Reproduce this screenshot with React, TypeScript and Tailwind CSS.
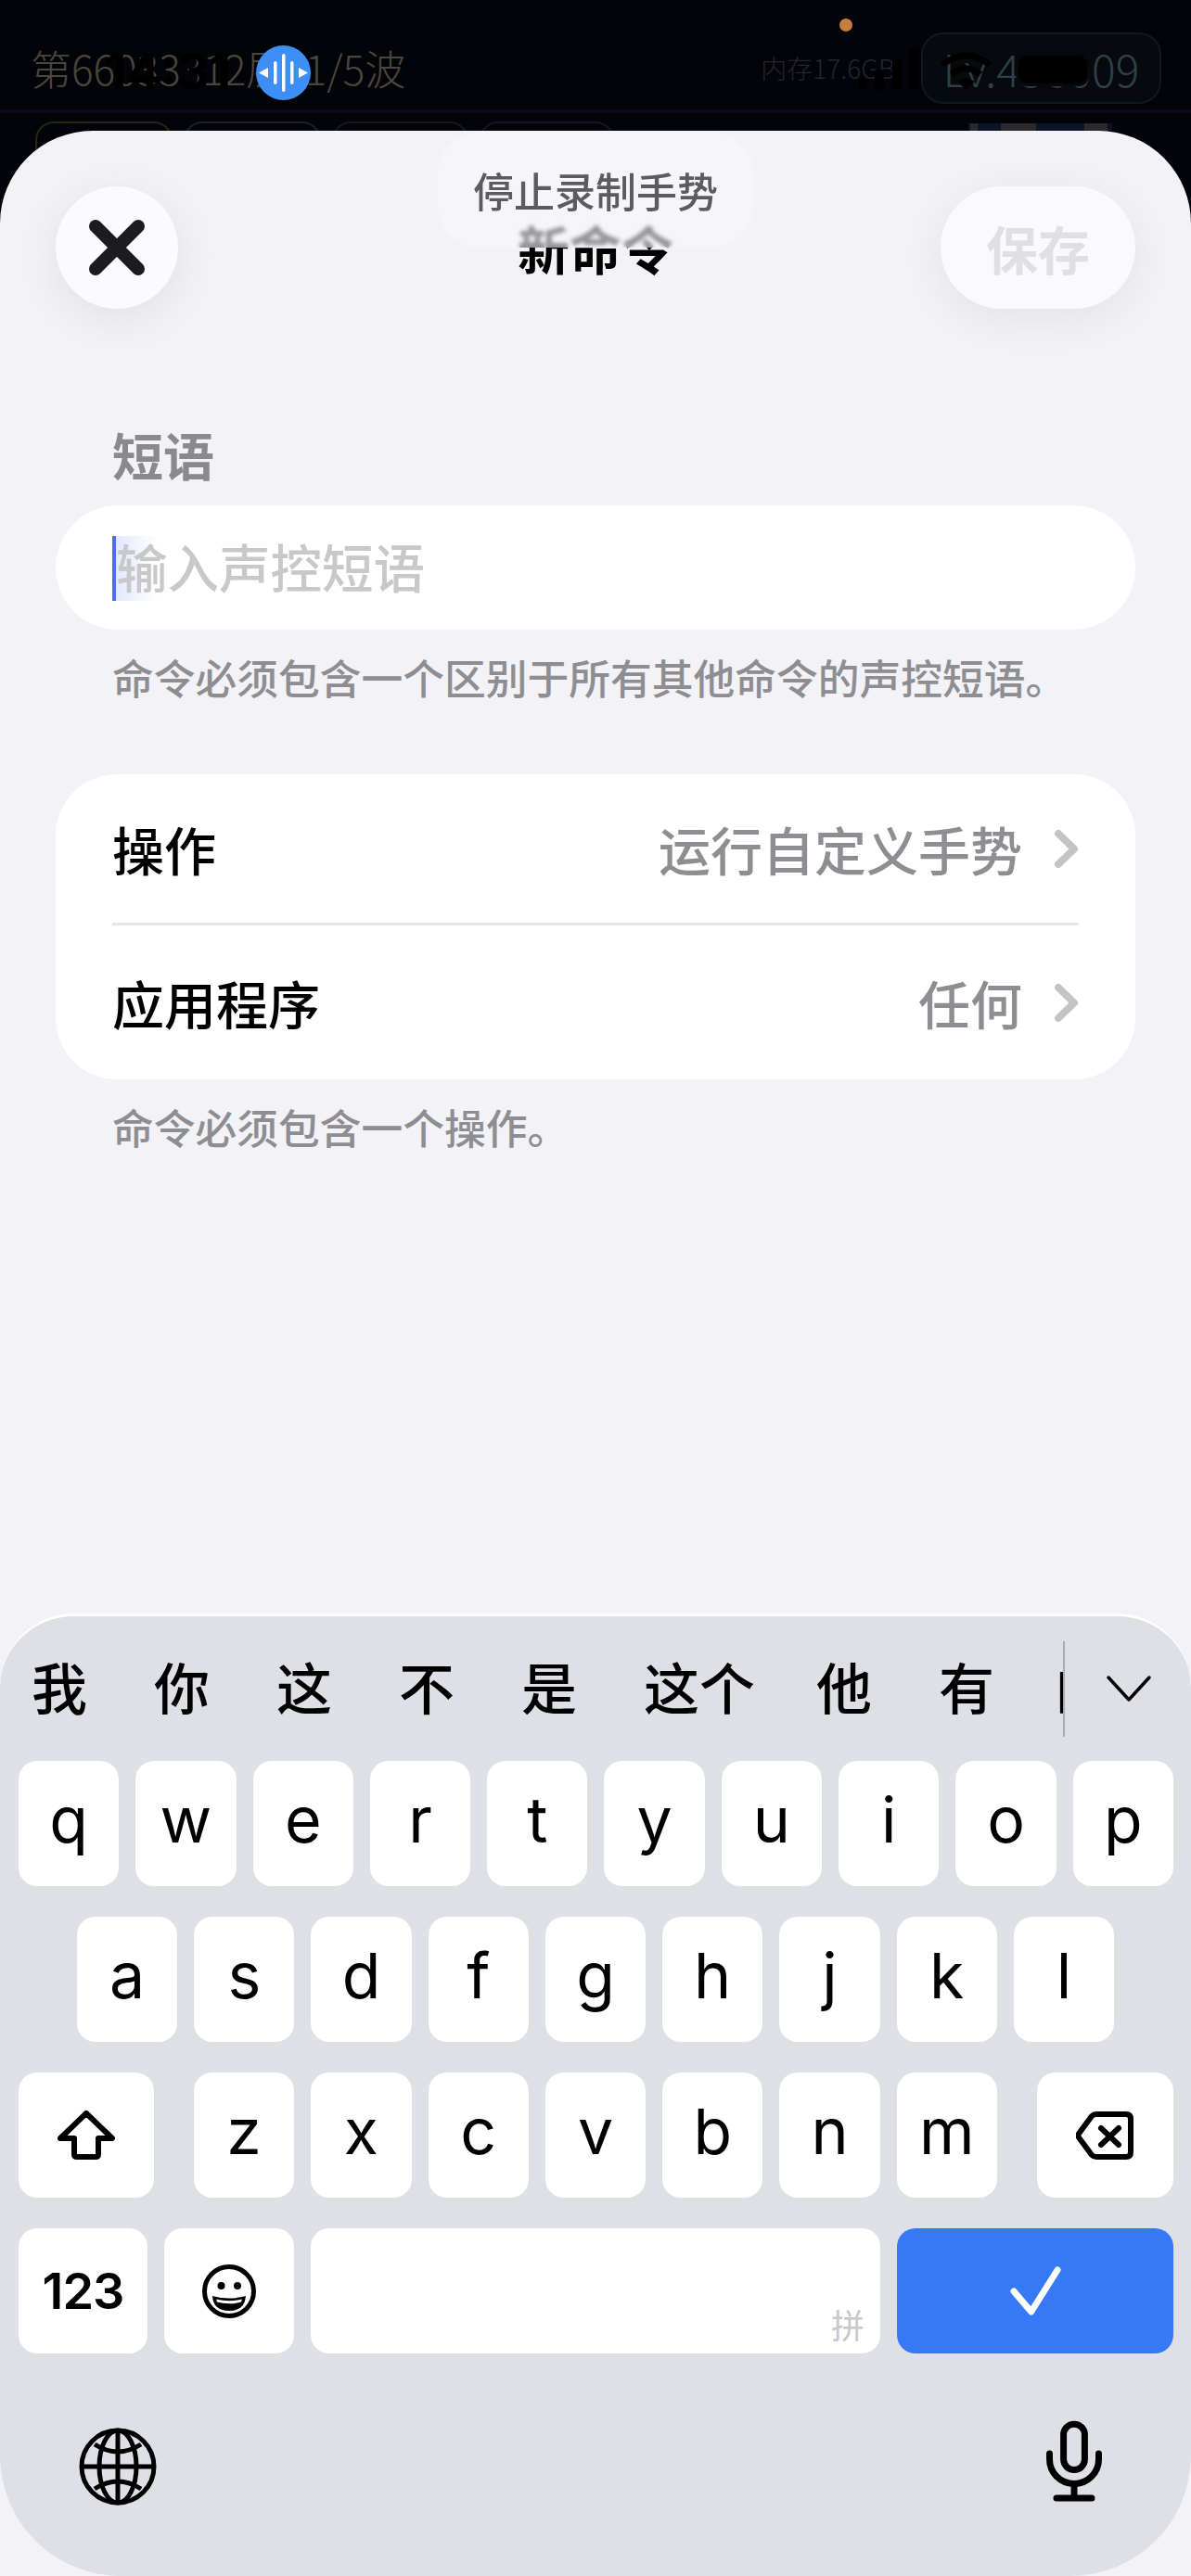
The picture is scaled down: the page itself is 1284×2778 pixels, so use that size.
import React from 'react';

const cjk = 'font-["Noto_Sans_CJK_SC","Noto_Sans",sans-serif]';
const latin = 'font-["Inter","Noto_Sans_CJK_SC",sans-serif]';

const candidates = ['我', '你', '这', '不', '是', '这个', '他', '有'];
const rowOne = ['q', 'w', 'e', 'r', 't', 'y', 'u', 'i', 'o', 'p'];
const rowTwo = ['a', 's', 'd', 'f', 'g', 'h', 'j', 'k', 'l'];
const rowThree = ['z', 'x', 'c', 'v', 'b', 'n', 'm'];

const Chevron = () => (
  <svg width="27" height="43" viewBox="0 0 27 43" fill="none" stroke="#c4c4c7" strokeWidth="8" strokeLinecap="round" strokeLinejoin="round">
    <path d="M5 5 L22 21.5 L5 38" />
  </svg>
);

const Key = ({ label }: { label: string }) => (
  <div className={`flex-1 h-[135px] rounded-[20px] bg-white flex items-center justify-center text-[68px] leading-none text-black pb-[10px] ${latin}`}>
    {label}
  </div>
);

const GameBar = () => (
  <div className="h-[122px] flex items-center justify-between pl-[33px] pr-[32px] pt-[28px] border-b-[4px] border-[#0e0b18]">
    <div className={`text-[44px] leading-none text-[#4b463b] font-light whitespace-pre ${cjk}`}>第66033312层  1/5波</div>
    <div className="flex items-center">
      <div className={`text-[28px] leading-none text-[#24262a] font-light mr-[28px] ${cjk}`}>内存17.6GB</div>
      <div className={`w-[259px] h-[77px] rounded-[24px] border-[2px] border-[#0f1a20] bg-[#060a0e] flex items-center justify-center text-[48px] leading-none text-[#2f4048] font-light ${cjk}`}>
        Lv.456009
      </div>
    </div>
  </div>
);

const App: React.FC = () => {
  return (
    <div className={`relative w-[1284px] h-[2778px] overflow-hidden bg-[#03030a] flex flex-col ${cjk}`}>
      <GameBar />

      {/* tabs peeking out above the sheet */}
      <div className="h-[19px] shrink-0 flex gap-[12px] pl-[38px] pt-[9px] overflow-visible">
        <div className="w-[148px] h-[60px] rounded-[20px] border-[2px] border-[#2a2410]" />
        <div className="w-[148px] h-[60px] rounded-[20px] border-[2px] border-[#14222a]" />
        <div className="w-[147px] h-[60px] rounded-[20px] border-[2px] border-[#0f1a28]" />
        <div className="w-[145px] h-[60px] rounded-[20px] border-[2px] border-[#1c1028]" />
        <div className="ml-[370px] w-[155px] h-[8px] mt-[2px] flex bg-[#0a1424]">
          <div className="ml-[2px] w-[8px] bg-[#2a2a2e]" />
          <div className="ml-[25px] w-[38px] bg-[#2a2a2e]" />
          <div className="ml-[52px] w-[25px] bg-[#2a2a2e]" />
        </div>
      </div>

      {/* status bar, lies over the game */}
      <div className={`absolute left-[113px] top-[50px] text-[54px] leading-none font-bold text-black ${latin}`}>14:31</div>
      <div className="absolute left-[276px] top-[49px] w-[59px] h-[59px] rounded-full bg-[#3d8ef5]">
        <svg width="59" height="59" viewBox="0 0 59 59" fill="#fff">
          <path d="M3 29.5 L13 24 V35 Z" />
          <path d="M56 29.5 L46 24 V35 Z" />
          <rect x="19" y="17" width="3.5" height="25" rx="1.7" />
          <rect x="28" y="9" width="3.5" height="41" rx="1.7" />
          <rect x="37" y="17" width="3.5" height="25" rx="1.7" />
        </svg>
      </div>
      <div className="absolute left-[905px] top-[20px] w-[14px] h-[14px] rounded-full bg-[#c67f3c]" />
      <svg className="absolute left-[925px] top-[53px]" width="66" height="44" viewBox="0 0 66 44" fill="#000">
        <rect x="0" y="32" width="10" height="12" rx="2" />
        <rect x="18" y="22" width="10" height="22" rx="2" />
        <rect x="37" y="10" width="10" height="34" rx="2" />
        <rect x="55" y="0" width="10" height="44" rx="2" />
      </svg>
      <svg className="absolute left-[1013px] top-[55px]" width="57" height="42" viewBox="0 0 57 42" fill="none" stroke="#000" strokeWidth="7">
        <path d="M3 15 Q28.5 -5 54 15" />
        <path d="M13 25 Q28.5 13 44 25" />
        <path d="M19 33 L28.5 42 L38 33 Q28.5 26 19 33 Z" fill="#000" stroke="none" />
      </svg>
      <div className="absolute left-[1098px] top-[60px] w-[74px] h-[30px] rounded-[10px] bg-black shadow-[0_0_0_3px_#07080c]" />

      {/* sheet */}
      <div className="relative flex-1 flex flex-col rounded-t-[100px] bg-[#f2f2f7]">
        <div className="flex items-center justify-between px-[60px] pt-[60px]">
          <div className="w-[210px]">
            <div className="w-[132px] h-[132px] rounded-full bg-[#fbfbfe] flex items-center justify-center shadow-[0_10px_50px_rgba(0,0,0,0.08)]">
              <svg width="60" height="60" viewBox="0 0 60 60" fill="none" stroke="#1c1c1e" strokeWidth="14" strokeLinecap="round">
                <path d="M7 7 L53 53 M53 7 L7 53" />
              </svg>
            </div>
          </div>
          <div className="text-[56px] leading-none font-bold text-black">新命令</div>
          <div className="w-[210px] h-[132px] rounded-full bg-[#faf9fe] flex items-center justify-center text-[56px] leading-none font-bold text-[#e0e0e3] shadow-[0_10px_50px_rgba(0,0,0,0.07)]">
            保存
          </div>
        </div>

        <div className="absolute left-[472px] top-[1px] w-[340px] h-[125px] rounded-[45px] bg-[#f6f6fb]/60 backdrop-blur-[2px] flex items-center justify-center text-[44px] leading-none font-medium text-[#5c5c60]">
          停止录制手势
        </div>

        <div className="px-[60px]">
          <div className="mt-[129px] pl-[61px] h-[60px] pb-[6px] flex items-center text-[55px] leading-none font-bold text-[#8a8a8e]">短语</div>

          <div className="relative mt-[23px] h-[134px] rounded-full bg-white flex items-center pl-[65px] pb-[2px] text-[55.5px] leading-none font-medium text-[#c8c8ca]">
            <div className="absolute left-[61px] top-[33px] w-[50px] h-[70px] bg-gradient-to-r from-[#e4e8ff] to-transparent border-l-[4px] border-[#4a6cf0]" />
            <span className="relative">输入声控短语</span>
          </div>

          <div className="mt-[30px] pl-[61px] h-[44px] pb-[2px] flex items-center text-[44.75px] leading-none font-medium text-[#8e8e92] whitespace-nowrap">
            命令必须包含一个区别于所有其他命令的声控短语。
          </div>

          <div className="mt-[82px] rounded-[66px] bg-white px-[61px]">
            <div className="h-[163px] flex items-center justify-between border-b-[3px] border-[#e5e5ea]">
              <span className="text-[56px] leading-none font-medium text-black">操作</span>
              <span className="flex items-center gap-[34px] text-[56px] leading-none font-medium text-[#8e8e92]">
                运行自定义手势
                <Chevron />
              </span>
            </div>
            <div className="h-[166px] flex items-center justify-between">
              <span className="text-[56px] leading-none font-medium text-black">应用程序</span>
              <span className="flex items-center gap-[34px] text-[56px] leading-none font-medium text-[#8e8e92]">
                任何
                <Chevron />
              </span>
            </div>
          </div>

          <div className="mt-[32px] pl-[61px] h-[44px] pb-[6px] flex items-center text-[44.75px] leading-none font-medium text-[#8e8e92]">
            命令必须包含一个操作。
          </div>
        </div>

        {/* keyboard */}
        <div className="mt-auto h-[1038px] rounded-t-[80px] rounded-b-[130px] border-t-[3px] border-white bg-[#dee0e5] flex flex-col">
          <div className="h-[156px] flex items-center">
            <div className="w-[1146px] pl-[34px] pb-[6px] flex items-center gap-[72px] text-[60px] leading-none font-medium text-black whitespace-nowrap">
              {candidates.map((c, i) => (
                <span key={i} className={i === 5 ? 'shrink-0 -mr-[6px]' : 'shrink-0'}>{c}</span>
              ))}
              {/* next candidate, only its edge shows before the divider */}
              <span className="shrink-0 w-[8px] -ml-[6px] overflow-hidden">的</span>
            </div>
            <div className="w-[2px] h-[103px] bg-[#a9abb0]" />
            <div className="flex-1 flex justify-center pl-[2px]">
              <svg width="50" height="30" viewBox="0 0 50 30" fill="none" stroke="#000" strokeWidth="3.5" strokeLinecap="round" strokeLinejoin="round">
                <path d="M3 3 L25 27 L47 3" />
              </svg>
            </div>
          </div>

          <div className="flex flex-col gap-[33px]">
            <div className="flex gap-[18px] pl-[20px] pr-[19px]">
              {rowOne.map((k) => <Key key={k} label={k} />)}
            </div>
            <div className="flex gap-[18px] pl-[83px] pr-[83px]">
              {rowTwo.map((k) => <Key key={k} label={k} />)}
            </div>
            <div className="flex gap-[18px] pl-[20px] pr-[19px]">
              <div className="w-[146px] h-[135px] mr-[25px] rounded-[20px] bg-white flex items-center justify-center">
                <svg width="62" height="54" viewBox="0 0 62 54" fill="none" stroke="#000" strokeWidth="6" strokeLinejoin="round">
                  <path d="M31 3 L59 30 H44 V47 Q44 50 41 50 H21 Q18 50 18 47 V30 H3 Z" />
                </svg>
              </div>
              {rowThree.map((k) => <Key key={k} label={k} />)}
              <div className="w-[147px] h-[135px] ml-[25px] rounded-[20px] bg-white flex items-center justify-center">
                <svg width="62" height="52" viewBox="0 0 62 52" fill="none" stroke="#000" strokeWidth="6" strokeLinecap="round" strokeLinejoin="round">
                  <path d="M22 3 H54 Q59 3 59 8 V44 Q59 49 54 49 H22 Q19 49 17 47 L3 28 Q2 26 3 24 L17 5 Q19 3 22 3 Z" />
                  <path d="M27 18 L46 36 M46 18 L27 36" />
                </svg>
              </div>
            </div>
            <div className="flex gap-[18px] pl-[20px] pr-[19px]">
              <div className={`w-[139px] h-[135px] rounded-[20px] bg-white flex items-center justify-center text-[54px] leading-none font-semibold text-black tracking-[-1px] ${latin}`}>
                123
              </div>
              <div className="w-[140px] h-[135px] rounded-[20px] bg-white flex items-center justify-center">
                <svg width="58" height="58" viewBox="0 0 58 58" fill="none">
                  <circle cx="29" cy="29" r="26.5" stroke="#000" strokeWidth="5" />
                  <circle cx="20.5" cy="23" r="4" fill="#000" />
                  <circle cx="38" cy="23" r="4" fill="#000" />
                  <path d="M11 34 Q29 39 47 34 Q46 50 29 50 Q12 50 11 34 Z" fill="#000" />
                  <path d="M15 37.5 Q29 41 43 37.5 L42 40.5 Q29 44 16 40.5 Z" fill="#fff" />
                </svg>
              </div>
              <div className="relative flex-1 h-[135px] rounded-[20px] bg-white">
                <span className="absolute right-[17px] bottom-[14px] text-[36px] leading-none text-[#c8c8cc]">拼</span>
              </div>
              <div className="w-[298px] h-[135px] rounded-[20px] bg-[#3579f6] flex items-center justify-center">
                <svg width="61" height="59" viewBox="0 0 61 59" fill="none" stroke="#fff" strokeWidth="7" strokeLinecap="round" strokeLinejoin="round">
                  <path d="M7 30 L25.7 52 L54 7" />
                </svg>
              </div>
            </div>
          </div>

          <div className="mt-[74px] h-[90px] flex items-end justify-between pl-[85px] pr-[92px]">
            <svg width="84" height="84" viewBox="0 0 84 84" fill="none" stroke="#000" strokeWidth="5">
              <circle cx="42" cy="42" r="39" />
              <ellipse cx="42" cy="42" rx="20" ry="39" />
              <path d="M42 3 V81 M3 42 H81" />
              <path d="M17 18 Q42 34 67 18 M17 66 Q42 50 67 66" />
            </svg>
            <svg width="68" height="96" viewBox="0 0 68 96" fill="none" stroke="#000" strokeWidth="7" strokeLinecap="round">
              <rect x="22.6" y="8.2" width="22.8" height="49.3" rx="11.4" />
              <path d="M7.5 40 V46 A26.5 26.5 0 0 0 60.5 46 V40" />
              <path d="M34 73 V88 M15 88 H53" />
            </svg>
          </div>
        </div>
      </div>
    </div>
  );
};

export default App;
